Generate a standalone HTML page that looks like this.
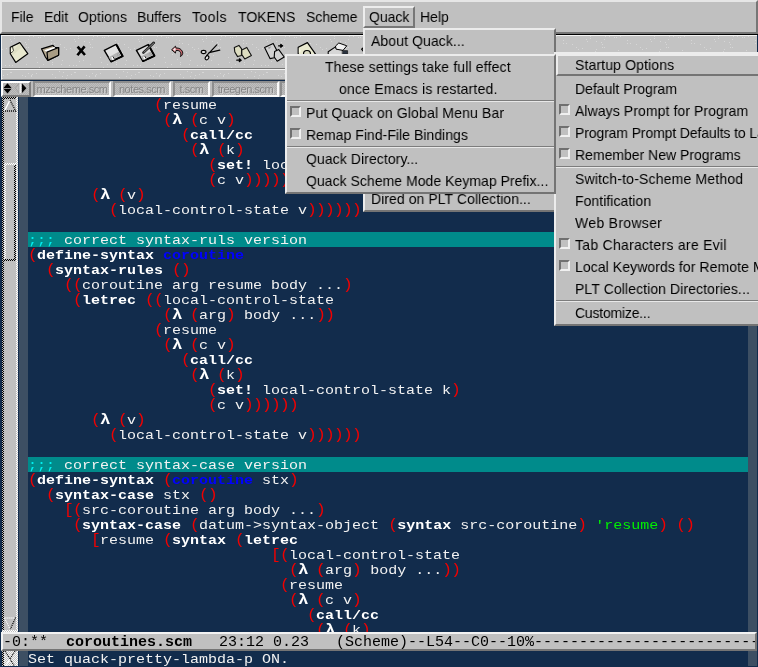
<!DOCTYPE html>
<html>
<head>
<meta charset="utf-8">
<title>emacs: coroutines.scm</title>
<style>
html,body{margin:0;padding:0;}
body{width:758px;height:667px;overflow:hidden;position:relative;background:#122c4c;font-family:"Liberation Sans",sans-serif;}
.abs{position:absolute;}
#code,#mini,.mi,#menubar span,.tab,#mltext{will-change:transform;}
#menubar{position:absolute;left:0;top:0;width:758px;height:34px;background:#c0c0c0;box-sizing:border-box;border-top:2px solid #e6e6e6;border-left:2px solid #e6e6e6;border-bottom:2px solid #767676;border-right:2px solid #767676;}
#menubar span{position:absolute;top:6px;transform:scaleX(.9333);transform-origin:0 0;font-size:15px;line-height:18px;color:#000;white-space:nowrap;}
#quackbtn{position:absolute;left:361px;top:4px;width:52px;height:22px;box-sizing:border-box;border-top:2px solid #ededed;border-left:2px solid #ededed;border-right:2px solid #777;border-bottom:2px solid #777;}
#blackline{position:absolute;left:0;top:34px;width:758px;height:1px;background:#000;}
#toolbar{position:absolute;left:0;top:35px;width:758px;height:45px;background:#c3c3c3;box-sizing:border-box;border-left:1px solid #122c4c;border-right:1px solid #122c4c;}
#toolbar .in{position:absolute;left:0;top:0;right:0;bottom:0;border-left:1px solid #f4f4f4;border-top:1px solid #f4f4f4;border-bottom:1px solid #8a8a8a;}
#toolbar .l1{position:absolute;left:1px;right:0;top:33px;height:1px;background:#747474;}
#toolbar .l2{position:absolute;left:1px;right:0;top:34px;height:1px;background:#f4f4f4;}
#tbsvg{position:absolute;left:0;top:35px;}
#tabbar{position:absolute;left:0;top:80px;width:758px;height:17px;background:#bcbcbc;box-sizing:border-box;border-top:1px solid #122c4c;border-left:1px solid #122c4c;}
#tabbtn{position:absolute;left:0;top:0;width:30px;height:16px;box-sizing:border-box;border-top:2px solid #fff;border-left:2px solid #fff;border-right:2px solid #7c7c7c;border-bottom:2px solid #7c7c7c;background:repeating-conic-gradient(#aeaeae 0% 25%,#bebebe 0% 50%) 0 0/2px 2px;}
.tab{position:absolute;top:0;height:16px;box-sizing:border-box;border-top:2px solid #8e8e8e;border-left:2px solid #8e8e8e;border-right:2px solid #fafafa;border-bottom:2px solid #fafafa;background:repeating-conic-gradient(#aeaeae 0% 25%,#bebebe 0% 50%) 0 0/2px 2px;color:#868686;font-size:11px;letter-spacing:-0.45px;line-height:12px;text-align:center;white-space:nowrap;overflow:hidden;text-shadow:1px 1px 0 #cfcfcf;}
#editor{position:absolute;left:0;top:97px;width:758px;height:570px;background:#122c4c;overflow:hidden;}
#sb{position:absolute;left:2px;top:0;width:16px;height:535px;background:#c0c0c0;}
#sb2{position:absolute;left:2px;top:554px;width:16px;height:15px;background:repeating-conic-gradient(#f4f4f4 0% 25%,#c4c4c4 0% 50%) 0 0/2px 2px;overflow:hidden;}
.dk{position:absolute;background:repeating-conic-gradient(#000 0% 25%,#c0c0c0 0% 50%) 0 0/2px 2px;}
.lt{position:absolute;background:repeating-conic-gradient(#fff 0% 25%,#c0c0c0 0% 50%) 0 0/2px 2px;}
#fringe{position:absolute;left:19px;top:0;width:9px;height:569px;background:#3d4f63;}
#fringeR{position:absolute;left:748px;top:0;width:9px;height:569px;background:#3d4f63;}
pre{margin:0;}
#code{position:absolute;left:28px;top:0;width:624px;transform:scaleX(1.15385);transform-origin:0 0;font-family:"Liberation Mono",monospace;font-size:13px;line-height:15px;color:#f2f2f2;}
#code div{height:15px;line-height:17px;white-space:pre;}
.p{color:#f20000;font-size:14px;letter-spacing:-.6px;}
.k{font-weight:bold;color:#fff;}
.lam{font-size:15px;letter-spacing:-1.2px;}
.f{color:#0000ff;font-weight:bold;}
.g{color:#00f000;}
.hl{background:#008b8b;}
.c{color:#00eeee;}
#modeline{position:absolute;left:1px;top:632px;width:756px;height:19px;background:#c0c0c0;box-sizing:border-box;border-top:2px solid #f2f2f2;border-left:2px solid #f2f2f2;border-bottom:2px solid #747474;border-right:2px solid #747474;font-family:"Liberation Mono",monospace;font-size:15px;line-height:17px;color:#000;white-space:pre;overflow:hidden;}
#mini{position:absolute;left:28px;top:651px;width:624px;height:16px;transform:scaleX(1.15385);transform-origin:0 0;font-family:"Liberation Mono",monospace;font-size:13px;line-height:17px;color:#f2f2f2;white-space:pre;}
.menu{position:absolute;background:#c0c0c0;box-sizing:border-box;border-top:2px solid #ececec;border-left:2px solid #ececec;border-right:2px solid #747474;border-bottom:2px solid #747474;overflow:hidden;}
.mi{position:absolute;left:0;right:0;height:22px;transform:scaleX(.9333);transform-origin:0 0;font-size:15px;line-height:22px;color:#000;white-space:nowrap;}
.raised{position:absolute;box-sizing:border-box;border-top:2px solid #ececec;border-left:2px solid #ececec;border-right:2px solid #747474;border-bottom:2px solid #747474;}
.sep{position:absolute;left:0;right:0;height:2px;border-top:1px solid #7c7c7c;border-bottom:1px solid #e8e8e8;box-sizing:border-box;}
.cb{position:absolute;width:11px;height:11px;box-sizing:border-box;border-top:2px solid #707070;border-left:2px solid #707070;border-right:2px solid #f0f0f0;border-bottom:2px solid #f0f0f0;background:#c0c0c0;}
</style>
</head>
<body>
<div id="menubar">
<span style="left:9px">File</span><span style="left:42px">Edit</span><span style="left:76px;letter-spacing:0.15px">Options</span><span style="left:135px">Buffers</span><span style="left:190px;letter-spacing:0.5px">Tools</span><span style="left:236px">TOKENS</span><span style="left:304px">Scheme</span><span style="left:367px">Quack</span><span style="left:418px">Help</span>
<div id="quackbtn"></div>
</div>
<div id="blackline"></div>
<div id="toolbar"><div class="in"></div><div class="l1"></div><div class="l2"></div></div>
<svg id="tbsvg" width="758" height="45" viewBox="0 35 758 45">
<defs><pattern id="stip" x="2" y="36" width="64" height="44" patternUnits="userSpaceOnUse"><g fill="#d6d6d6"><rect x="57" y="35" width="1" height="1"/><rect x="59" y="28" width="1" height="1"/><rect x="24" y="11" width="1" height="1"/><rect x="60" y="40" width="1" height="1"/><rect x="23" y="6" width="1" height="1"/><rect x="57" y="19" width="1" height="1"/><rect x="18" y="5" width="1" height="1"/><rect x="5" y="38" width="1" height="1"/><rect x="50" y="28" width="1" height="1"/><rect x="20" y="39" width="1" height="1"/><rect x="1" y="33" width="1" height="1"/><rect x="8" y="3" width="1" height="1"/><rect x="4" y="12" width="1" height="1"/><rect x="30" y="38" width="1" height="1"/><rect x="3" y="29" width="1" height="1"/><rect x="41" y="28" width="1" height="1"/><rect x="25" y="33" width="1" height="1"/><rect x="29" y="40" width="1" height="1"/><rect x="37" y="31" width="1" height="1"/><rect x="0" y="42" width="1" height="1"/><rect x="10" y="29" width="1" height="1"/><rect x="35" y="26" width="1" height="1"/><rect x="10" y="16" width="1" height="1"/><rect x="40" y="14" width="1" height="1"/><rect x="36" y="1" width="1" height="1"/><rect x="8" y="36" width="1" height="1"/><rect x="13" y="25" width="1" height="1"/><rect x="13" y="18" width="1" height="1"/><rect x="49" y="4" width="1" height="1"/><rect x="2" y="43" width="1" height="1"/><rect x="0" y="13" width="1" height="1"/><rect x="26" y="3" width="1" height="1"/><rect x="60" y="24" width="1" height="1"/><rect x="50" y="26" width="1" height="1"/><rect x="9" y="36" width="1" height="1"/><rect x="25" y="43" width="1" height="1"/><rect x="34" y="21" width="1" height="1"/><rect x="11" y="19" width="1" height="1"/><rect x="42" y="0" width="1" height="1"/><rect x="52" y="7" width="1" height="1"/><rect x="17" y="15" width="1" height="1"/><rect x="12" y="0" width="1" height="1"/><rect x="7" y="29" width="1" height="1"/><rect x="62" y="11" width="1" height="1"/><rect x="24" y="28" width="1" height="1"/><rect x="24" y="8" width="1" height="1"/><rect x="53" y="41" width="1" height="1"/><rect x="49" y="7" width="1" height="1"/><rect x="50" y="26" width="1" height="1"/><rect x="27" y="0" width="1" height="1"/><rect x="34" y="37" width="1" height="1"/><rect x="38" y="1" width="1" height="1"/><rect x="26" y="11" width="1" height="1"/><rect x="50" y="38" width="1" height="1"/><rect x="12" y="2" width="1" height="1"/><rect x="18" y="13" width="1" height="1"/><rect x="56" y="16" width="1" height="1"/><rect x="1" y="39" width="1" height="1"/><rect x="42" y="18" width="1" height="1"/><rect x="49" y="4" width="1" height="1"/><rect x="9" y="5" width="1" height="1"/><rect x="26" y="37" width="1" height="1"/><rect x="31" y="0" width="1" height="1"/><rect x="47" y="23" width="1" height="1"/><rect x="58" y="8" width="1" height="1"/><rect x="61" y="36" width="1" height="1"/><rect x="17" y="24" width="1" height="1"/><rect x="23" y="40" width="1" height="1"/><rect x="19" y="19" width="1" height="1"/><rect x="29" y="39" width="1" height="1"/></g></pattern></defs>
<rect x="2" y="36" width="756" height="32" fill="url(#stip)"/>
<rect x="2" y="70" width="756" height="9" fill="url(#stip)"/>
<g id="icons" stroke-linejoin="round" stroke-linecap="round">
<!-- new -->
<path d="M10.3 47.2 L19.8 42.6 L27.8 53.7 L15.7 62.4 L10.3 53.7Z" fill="#e9e9cf" stroke="#000" stroke-width="1.2"/>
<path d="M10.9 47.6 L13.2 51 L10.9 53Z" fill="#fafae6" stroke="none"/>
<path d="M12.4 46.4 L13.6 51 L10.4 53.4" fill="none" stroke="#000" stroke-width=".7"/>
<path d="M13.2 51 L19.6 43.6 L22 46.8 L12 56Z" fill="#dcdcc0" stroke="none" opacity=".7"/>
<!-- open -->
<path d="M41.5 48.8 L53 45.4 L54.8 47.5 L58.6 47.5 L58.6 55.3 L47.8 60.4 L45.4 57Z" fill="#b7ab93" stroke="#000" stroke-width="1.2"/>
<path d="M44.2 50.2 L54.4 46.8 L55.4 48.6 L47 52.2Z" fill="#fff" stroke="none"/>
<path d="M47 52.1 L58.6 47.5 L58.6 55.3 L47.8 60.4Z" fill="#a89c84" stroke="#000" stroke-width="1.2"/>
<!-- close X -->
<path d="M77.6 46.6 L85 55 M84.6 46.4 L77.4 55.2" fill="none" stroke="#000" stroke-width="2.6" stroke-linecap="butt"/>
<!-- save -->
<path d="M104.3 50.3 L116.2 44.3 L122.8 56.2 L111 61.6Z" fill="#e2e2e2" stroke="#000" stroke-width="1.4"/>
<path d="M116.8 45.2 L122.6 56.2 L111.4 61.4" fill="none" stroke="#000" stroke-width="2"/>
<path d="M108.6 57.2 L118.6 51.8 L120.8 55.6 L111 60.4Z" fill="#b4b4b4" stroke="none"/>
<path d="M111.2 57.4 L113.6 56.2 L115 59 L112.6 60.2Z" fill="#fafafa" stroke="none"/>
<path d="M113.2 56.8 L114.2 58.6" fill="none" stroke="#111" stroke-width="1"/>
<ellipse cx="118.4" cy="54.6" rx=".9" ry="1.3" fill="#cfcfcf" stroke="#8a8a8a" stroke-width=".6"/>
<!-- save as -->
<path d="M136.4 50.4 L148.2 44.6 L154.5 55.8 L142.8 61.2Z" fill="#dcdcdc" stroke="#000" stroke-width="1.4"/>
<path d="M148.8 45.4 L154.4 55.8 L143.2 61" fill="none" stroke="#000" stroke-width="2"/>
<path d="M140.6 56.8 L150.4 51.6 L152.6 55.2 L142.8 60Z" fill="#b0b0b0" stroke="none"/>
<path d="M143 57 L145.4 55.8 L146.8 58.6 L144.4 59.8Z" fill="#fafafa" stroke="none"/>
<path d="M145 56.4 L146 58.2" fill="none" stroke="#111" stroke-width="1"/>
<ellipse cx="150.2" cy="54.2" rx=".9" ry="1.3" fill="#cfcfcf" stroke="#8a8a8a" stroke-width=".6"/>
<path d="M143.4 52.6 L153.8 42.8" fill="none" stroke="#222" stroke-width="2.6"/>
<path d="M144 52.2 L153.6 43.2" fill="none" stroke="#8a8a8a" stroke-width="1"/>
<!-- undo -->
<path d="M171.9 49.5 L175.5 46.2 L175.9 48 C179 47.8 181.5 49 182.6 52 C183.2 54 182 55.8 180.4 56.6 C181.2 54.6 181 53 180 51.6 C179 50.4 177.5 50.3 175.8 50.6 L175.5 52.7Z" fill="#cc6a70" stroke="#000" stroke-width=".9"/>
<path d="M173 49.5 L175.2 47.6 L175.6 49.2 L175.4 51.4Z" fill="#f6f0f0" stroke="none"/>
<!-- cut -->
<path d="M206.6 55.6 L216.8 44.8 M209 52.6 L219.8 50.2" fill="none" stroke="#000" stroke-width="1.2"/>
<ellipse cx="203.6" cy="52" rx="2.4" ry="1.6" fill="#e6e6e6" stroke="#000" stroke-width="1.1"/>
<ellipse cx="207" cy="57.8" rx="1.6" ry="2.2" transform="rotate(35 207 57.8)" fill="#e6e6e6" stroke="#000" stroke-width="1.1"/>
<!-- copy -->
<path d="M234.3 47.4 L238.9 45.4 L241.6 48.8 L241.4 55.4 L237.6 56.6 L234.8 52Z" fill="#dcdcc0" stroke="#111" stroke-width="1.1"/>
<path d="M241.8 50 L246.8 47.4 L251.4 55.4 L244.8 59 L241.8 54.6Z" fill="#dcdcc0" stroke="#111" stroke-width="1.1"/>
<path d="M236.8 60.2 L239.6 60.2 M239.4 58.8 L241.2 60.2 L239.4 61.6Z" fill="#000" stroke="#000" stroke-width="1.3"/>
<!-- paste -->
<path d="M264.6 47.4 L273.2 43.4 L276.6 50 L274.2 57.8 L270 58.6Z" fill="#d2d2d2" stroke="#000" stroke-width="1.1"/>
<path d="M268 47.6 L271.6 46.2 L269 49.2Z" fill="#9a9a9a" stroke="none"/>
<path d="M274.6 51.6 L278.8 49.6 L284.2 57 L277.2 61.2 L274.2 57Z" fill="#d2d2d2" stroke="#000" stroke-width="1.1"/>
<path d="M278.6 45.8 L281 45.8 M280.8 44.4 L282.6 45.8 L280.8 47.2Z" fill="#000" stroke="#000" stroke-width="1.3"/>
<!-- search -->
<path d="M298.2 47.2 L307.4 42.6 L315.4 53.8 L303 62 L298.2 54Z" fill="#e9e9cf" stroke="#000" stroke-width="1.2"/>
<path d="M298.8 47.8 L301 51 L298.8 53Z" fill="#fafae6" stroke="none"/>
<circle cx="307" cy="54" r="3.5" fill="#d8d8c0" stroke="#000" stroke-width="1.2"/>
<!-- print -->
<path d="M328.2 54 L328.2 51.8 L335.8 46.6 L347.6 50 L347.6 54Z" fill="#d6d6d6" stroke="none"/>
<path d="M328.2 54 L328.2 51.8 L335.8 46.6" fill="none" stroke="#000" stroke-width="1.1"/>
<path d="M335.8 45.8 L338.8 43 L346.8 45.8 L343 50.4 L336.4 49.2Z" fill="#f2f2f2" stroke="#000" stroke-width="1"/>
<rect x="342.6" y="50.6" width="5" height="3.6" fill="#2c3440" stroke="#000" stroke-width=".6"/>
<!-- next icon sliver -->
<path d="M363.4 47.6 L361.6 49.2 L363.2 51" fill="none" stroke="#000" stroke-width="1.2"/>
</g>
</svg>
<div id="tabbar">
<div id="tabbtn"></div>
<svg class="abs" style="left:0;top:0" width="30" height="16" viewBox="1 81 30 16">
<path d="M7.5 83.2 L11.6 87.9 L3.4 87.9Z M3.4 88.7 L11.6 88.7 L7.5 93.4Z" fill="#000"/>
<path d="M19 83.6 L19 92.8 L15.4 88.2Z" fill="#bdbdbd" stroke="#9a9a9a" stroke-width=".8"/>
<rect x="19.6" y="83.4" width="1.2" height="9.8" fill="#fff"/>
<path d="M22 83.4 L26.4 88.2 L22 93Z" fill="#000"/>
</svg>
<div class="tab" style="left:32px;width:78px;">mzscheme.scm</div>
<div class="tab" style="left:112px;width:58px;">notes.scm</div>
<div class="tab" style="left:172px;width:37px;">t.scm</div>
<div class="tab" style="left:211px;width:67px;">treegen.scm</div>
<div class="tab" style="left:279px;width:60px;">gen.scm</div>
</div>
<div id="editor">
<div id="sb">
<div class="dk" style="left:0;top:0;width:2px;height:535px;"></div>
<div class="dk" style="left:0;top:0;width:16px;height:2px;"></div>
<div class="lt" style="left:14px;top:0;width:2px;height:535px;"></div>
<div class="lt" style="left:0;top:533px;width:16px;height:2px;"></div>
<svg class="abs" style="left:0;top:0" width="16" height="535" viewBox="2 97 16 535">
<path d="M10 100 L4.6 110.6" stroke="#fff" stroke-width="1.4" fill="none"/>
<path d="M10 100 L15.6 111 L5 111" stroke="#000" stroke-width="1.3" stroke-dasharray="1 1" fill="none"/>
<path d="M4.6 618 L16 618 M4.6 618 L10 629" stroke="#fff" stroke-width="1.3" stroke-dasharray="1 1" fill="none"/>
<path d="M15.6 617.6 L10.4 629" stroke="#000" stroke-width="1.3" stroke-dasharray="1 1" fill="none"/>
</svg>
<div class="lt" style="left:2px;top:66px;width:12px;height:2px;"></div>
<div class="lt" style="left:2px;top:66px;width:2px;height:98px;"></div>
<div class="dk" style="left:12px;top:68px;width:2px;height:96px;"></div>
<div class="dk" style="left:2px;top:162px;width:12px;height:2px;"></div>
</div>
<div id="sb2">
<div class="dk" style="left:0;top:0;width:2px;height:16px;"></div>
<div class="lt" style="left:14px;top:0;width:2px;height:16px;"></div>
<svg class="abs" style="left:0;top:0" width="16" height="16" viewBox="0 0 16 16">
<path d="M3 0 L13 16 M13 0 L8 8" stroke="#000" stroke-width="1.2" stroke-dasharray="1 1" fill="none"/>
<path d="M3 16 L8 8" stroke="#fff" stroke-width="1.2" fill="none"/>
</svg>
</div>
<div id="fringe"></div><div id="fringeR"></div>
<div id="code">
<div>              <span class="p">(</span>resume</div>
<div>               <span class="p">(</span><span class="k lam">λ</span> <span class="p">(</span>c v<span class="p">)</span></div>
<div>                 <span class="p">(</span><span class="k">call/cc</span></div>
<div>                  <span class="p">(</span><span class="k lam">λ</span> <span class="p">(</span>k<span class="p">)</span></div>
<div>                    <span class="p">(</span><span class="k">set!</span> local-control-state k<span class="p">)</span></div>
<div>                    <span class="p">(</span>c v<span class="p">))))))</span></div>
<div>       <span class="p">(</span><span class="k lam">λ</span> <span class="p">(</span>v<span class="p">)</span></div>
<div>         <span class="p">(</span>local-control-state v<span class="p">))))))</span></div>
<div></div>
<div class="hl"><span class="c">;;;</span> correct syntax-ruls version</div>
<div><span class="p">(</span><span class="k">define-syntax</span> <span class="f">coroutine</span></div>
<div>  <span class="p">(</span><span class="k">syntax-rules</span> <span class="p">()</span></div>
<div>    <span class="p">((</span>coroutine arg resume body ...<span class="p">)</span></div>
<div>     <span class="p">(</span><span class="k">letrec</span> <span class="p">((</span>local-control-state</div>
<div>               <span class="p">(</span><span class="k lam">λ</span> <span class="p">(</span>arg<span class="p">)</span> body ...<span class="p">))</span></div>
<div>              <span class="p">(</span>resume</div>
<div>               <span class="p">(</span><span class="k lam">λ</span> <span class="p">(</span>c v<span class="p">)</span></div>
<div>                 <span class="p">(</span><span class="k">call/cc</span></div>
<div>                  <span class="p">(</span><span class="k lam">λ</span> <span class="p">(</span>k<span class="p">)</span></div>
<div>                    <span class="p">(</span><span class="k">set!</span> local-control-state k<span class="p">)</span></div>
<div>                    <span class="p">(</span>c v<span class="p">))))))</span></div>
<div>       <span class="p">(</span><span class="k lam">λ</span> <span class="p">(</span>v<span class="p">)</span></div>
<div>         <span class="p">(</span>local-control-state v<span class="p">))))))</span></div>
<div></div>
<div class="hl"><span class="c">;;;</span> correct syntax-case version</div>
<div><span class="p">(</span><span class="k">define-syntax</span> <span class="p">(</span><span class="f">coroutine</span> stx<span class="p">)</span></div>
<div>  <span class="p">(</span><span class="k">syntax-case</span> stx <span class="p">()</span></div>
<div>    <span class="p">[(</span>src-coroutine arg body ...<span class="p">)</span></div>
<div>     <span class="p">(</span><span class="k">syntax-case</span> <span class="p">(</span>datum-&gt;syntax-object <span class="p">(</span><span class="k">syntax</span> src-coroutine<span class="p">)</span> <span class="g">'resume</span><span class="p">)</span> <span class="p">()</span></div>
<div>       <span class="p">[</span>resume <span class="p">(</span><span class="k">syntax</span> <span class="p">(</span><span class="k">letrec</span></div>
<div>                           <span class="p">[(</span>local-control-state</div>
<div>                             <span class="p">(</span><span class="k lam">λ</span> <span class="p">(</span>arg<span class="p">)</span> body ...<span class="p">))</span></div>
<div>                            <span class="p">(</span>resume</div>
<div>                             <span class="p">(</span><span class="k lam">λ</span> <span class="p">(</span>c v<span class="p">)</span></div>
<div>                               <span class="p">(</span><span class="k">call/cc</span></div>
<div>                                <span class="p">(</span><span class="k lam">λ</span> <span class="p">(</span>k<span class="p">)</span></div>
</div>
</div>
<div id="modeline"><div id="mltext">-0:**  <b>coroutines.scm</b>   23:12 0.23   (Scheme)--L54--C0--10%---------------------------------------</div></div>
<div id="mini">Set quack-pretty-lambda-p ON.</div>

<!-- Quack dropdown -->
<div class="menu" id="m1" style="left:363px;top:28px;width:193px;height:184px;">
<div class="mi" style="top:0;left:5.5px;letter-spacing:0.1px;">About Quack...</div>
<div class="mi" style="top:158px;left:5.5px;letter-spacing:0.07px;">Dired on PLT Collection...</div>
</div>
<!-- Options submenu -->
<div class="menu" id="m3" style="left:554px;top:52px;width:260px;height:274px;">
<div class="raised" style="left:0;top:0;width:260px;height:22px;"></div>
<div class="mi" style="top:0;left:19px;letter-spacing:0.14px;">Startup Options</div>
<div class="mi" style="top:24px;left:19px;">Default Program</div>
<div class="cb" style="left:3px;top:50px;"></div><div class="mi" style="top:46px;left:19px;letter-spacing:0.09px;">Always Prompt for Program</div>
<div class="cb" style="left:3px;top:72px;"></div><div class="mi" style="top:68px;left:19px;letter-spacing:-0.125px;">Program Prompt Defaults to Last</div>
<div class="cb" style="left:3px;top:94px;"></div><div class="mi" style="top:90px;left:19px;">Remember New Programs</div>
<div class="sep" style="top:112px;"></div>
<div class="mi" style="top:114px;left:19px;letter-spacing:0.19px;">Switch-to-Scheme Method</div>
<div class="mi" style="top:136px;left:19px;letter-spacing:0.05px;">Fontification</div>
<div class="mi" style="top:158px;left:19px;letter-spacing:0.33px;">Web Browser</div>
<div class="cb" style="left:3px;top:184px;"></div><div class="mi" style="top:180px;left:19px;letter-spacing:0.29px;">Tab Characters are Evil</div>
<div class="cb" style="left:3px;top:206px;"></div><div class="mi" style="top:202px;left:19px;letter-spacing:0.085px;">Local Keywords for Remote Manuals</div>
<div class="mi" style="top:224px;left:19px;letter-spacing:0.1px;">PLT Collection Directories...</div>
<div class="sep" style="top:246px;"></div>
<div class="mi" style="top:248px;left:19px;letter-spacing:-0.22px;">Customize...</div>
</div>
<!-- Startup Options submenu -->
<div class="menu" id="m2" style="left:285px;top:54px;width:271px;height:140px;">
<div class="mi" style="top:0;left:38px;letter-spacing:0.16px;">These settings take full effect</div>
<div class="mi" style="top:22px;left:51.6px;letter-spacing:0.2px;">once Emacs is restarted.</div>
<div class="sep" style="top:44px;"></div>
<div class="cb" style="left:3px;top:50px;"></div><div class="mi" style="top:46px;left:19px;letter-spacing:0.17px;">Put Quack on Global Menu Bar</div>
<div class="cb" style="left:3px;top:72px;"></div><div class="mi" style="top:68px;left:19px;letter-spacing:0.04px;">Remap Find-File Bindings</div>
<div class="sep" style="top:90px;"></div>
<div class="mi" style="top:92px;left:19px;letter-spacing:0.08px;">Quack Directory...</div>
<div class="mi" style="top:114px;left:19px;letter-spacing:0.035px;">Quack Scheme Mode Keymap Prefix...</div>
</div>
</body>
</html>
